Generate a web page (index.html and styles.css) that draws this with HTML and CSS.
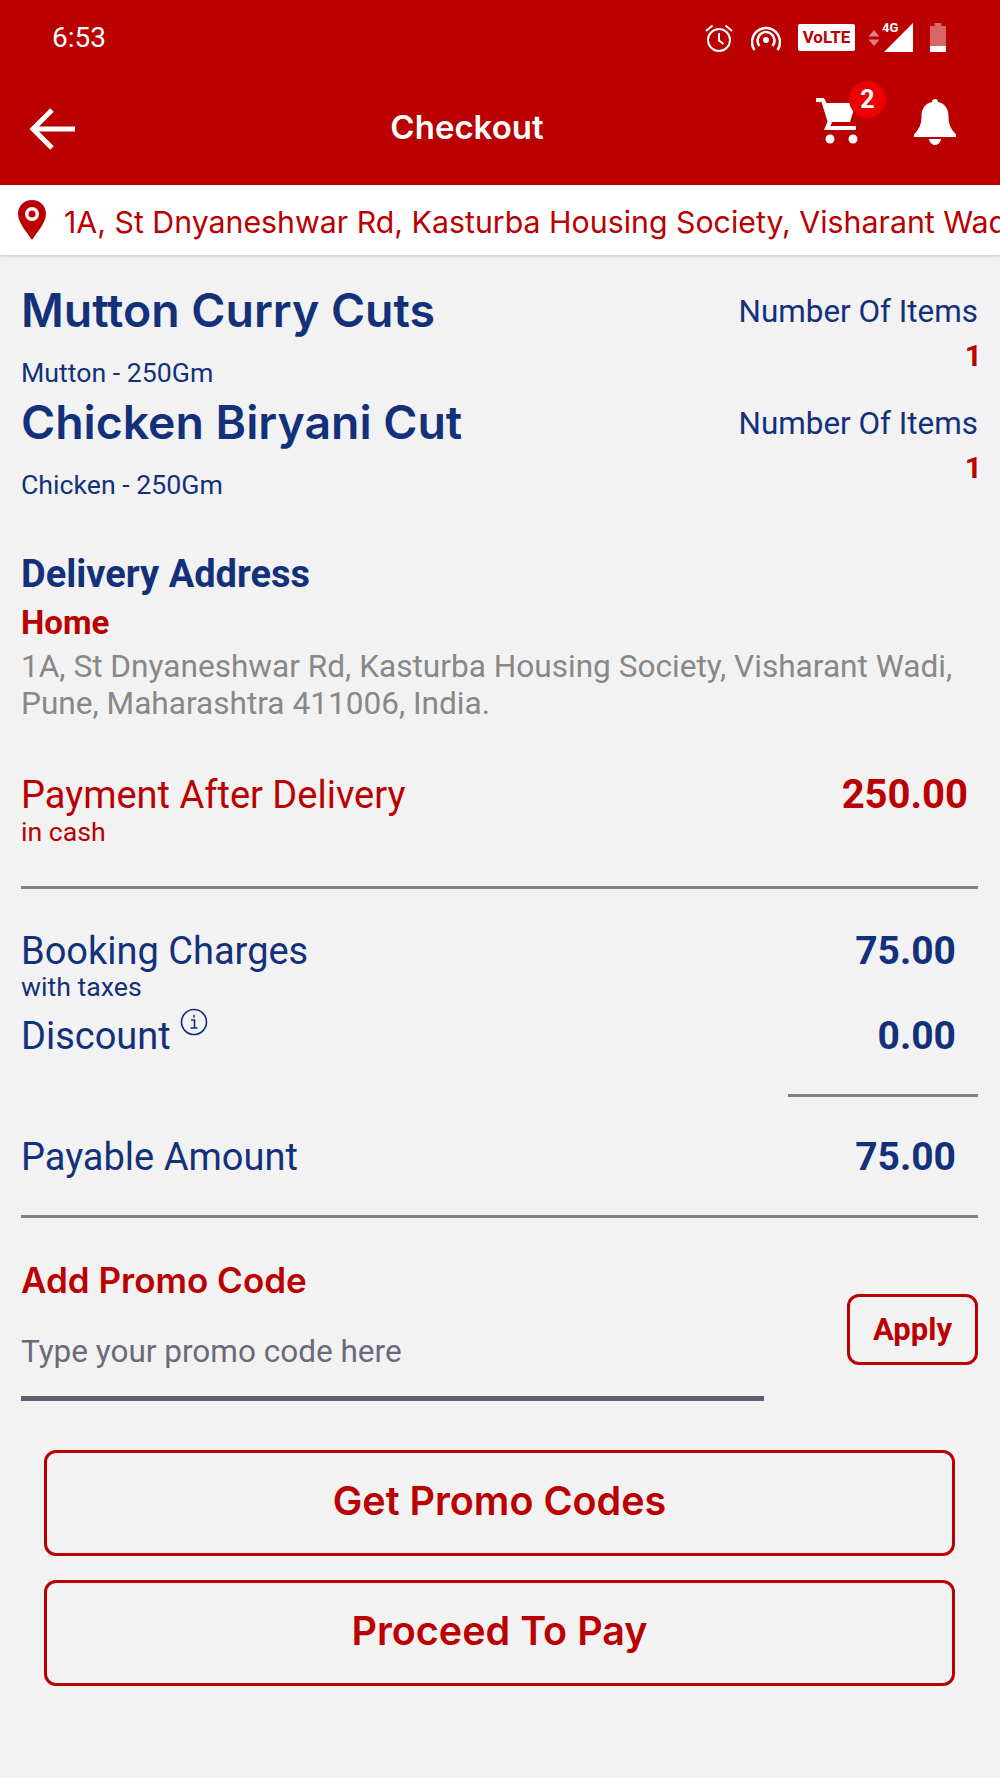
FILE: index.html
```html
<!DOCTYPE html>
<html lang="en">
<head>
    <meta charset="UTF-8">
    <meta name="viewport" content="width=device-width, initial-scale=1.0">
    <title>Checkout</title>
    <link rel="stylesheet" href="styles.css">
</head>
<body>
    <header class="app-header">
        <div class="status-bar">
            <span class="clock">6:53</span>
            <div class="status-icons">
                <svg class="ic-alarm" width="30" height="30" viewBox="0 0 30 30" fill="none" stroke="#fff" stroke-width="2">
                    <circle cx="15" cy="17" r="11"/>
                    <path d="M15 10v7.500l4.500 3.500M2 8l6.500-5.500M28 8l-6.500-5.500"/>
                </svg>
                <svg class="ic-hotspot" width="30" height="26" viewBox="0 0 30 26" fill="none" stroke="#fff" stroke-width="2.600">
                    <circle cx="15" cy="15" r="3" fill="#fff" stroke="none"/>
                    <path d="M8.500 21a8.500 8.500 0 1 1 13 0M3.500 25a14 14 0 1 1 23 0"/>
                </svg>
                <span class="volte">VoLTE</span>
                <svg class="ic-updown" width="12" height="16" viewBox="0 0 12 16" fill="#e08080">
                    <path d="M6 0l5.500 6.500H.5zM6 16L.5 9.500h11z"/>
                </svg>
                <span class="signal">
                    <span class="signal-label">4G</span>
                    <svg width="30" height="30" viewBox="0 0 30 30" fill="#fff"><path d="M29 0v29H0z"/></svg>
                </span>
                <svg class="ic-battery" width="16" height="29" viewBox="0 0 16 29">
                    <path d="M4.500 0h7v3H16v26H0V3h4.500z" fill="#d96666"/>
                    <path d="M0 23h16v6H0z" fill="#fff"/>
                </svg>
            </div>
        </div>
        <div class="toolbar">
            <svg class="ic-back" width="48" height="44" viewBox="0 0 48 44" fill="none" stroke="#fff" stroke-width="5">
                <path d="M5 22h41M23 3L4 22l19 19"/>
            </svg>
            <h1 class="toolbar-title">Checkout</h1>
            <div class="cart">
                <svg width="46" height="48" viewBox="0 0 46 48" fill="#fff">
                    <path d="M0 2h8l2.500 5H40l-6 19H16l-1.500 4H40v4H8l3.500-8.500L5.500 6H0z"/>
                    <circle cx="14" cy="43" r="4.500"/>
                    <circle cx="37" cy="43" r="4.500"/>
                </svg>
                <span class="cart-badge">2</span>
            </div>
            <svg class="ic-bell" width="42" height="46" viewBox="0 0 42 46" fill="#fff">
                <path d="M21 0c2 0 3 1.300 3 3 7 1.500 10.500 7 10.500 14 0 9 2.500 13 7.500 18.500V38H0v-2.500C5 30 7.500 26 7.500 17 7.500 10 11 4.500 18 3c0-1.700 1-3 3-3z"/>
                <path d="M15 40h12c-.5 3.500-3 6-6 6s-5.500-2.500-6-6z"/>
            </svg>
        </div>
    </header>

    <div class="address-bar">
        <svg width="28" height="40" viewBox="0 0 28 40">
            <path d="M14 0C6 0 0 6 0 14c0 9 9 18 14 26 5-8 14-17 14-26C28 6 22 0 14 0z" fill="#ba0000"/>
            <circle cx="14" cy="14" r="7" fill="#fff"/>
            <circle cx="14" cy="14" r="3.500" fill="#ba0000"/>
        </svg>
        <span class="address-text">1A, St Dnyaneshwar Rd, Kasturba Housing Society, Visharant Wadi, Pune, Maharashtra 411006, India.</span>
    </div>

    <main class="content">
        <section class="items">
            <div class="item">
                <div>
                    <h2 class="item-name">Mutton Curry Cuts</h2>
                    <p class="item-sub">Mutton - 250Gm</p>
                </div>
                <div class="item-count">
                    <span>Number Of Items</span>
                    <strong>1</strong>
                </div>
            </div>
            <div class="item">
                <div>
                    <h2 class="item-name">Chicken Biryani Cut</h2>
                    <p class="item-sub">Chicken - 250Gm</p>
                </div>
                <div class="item-count">
                    <span>Number Of Items</span>
                    <strong>1</strong>
                </div>
            </div>
        </section>

        <section class="delivery">
            <h3>Delivery Address</h3>
            <h4>Home</h4>
            <p>1A, St Dnyaneshwar Rd, Kasturba Housing Society, Visharant Wadi, Pune, Maharashtra 411006, India.</p>
        </section>

        <section class="pay-row">
            <div>
                <div class="pay-label">Payment After Delivery</div>
                <div class="pay-sub">in cash</div>
            </div>
            <div class="pay-amount">250.00</div>
        </section>

        <hr class="rule">

        <section class="charges">
            <div class="charge">
                <div>
                    <div class="charge-label">Booking Charges</div>
                    <div class="charge-sub">with taxes</div>
                </div>
                <div class="charge-amount">75.00</div>
            </div>
            <div class="charge charge-discount">
                <div class="charge-label">Discount<svg class="ic-info" width="28" height="28" viewBox="0 0 28 28" fill="none" stroke="#12317a" stroke-width="1.600">
                        <circle cx="14" cy="14" r="12.500"/>
                        <path d="M11 12h3.500v8M10.500 20h7M14 7v2.500"/>
                    </svg></div>
                <div class="charge-amount">0.00</div>
            </div>
        </section>

        <hr class="rule rule-short">

        <section class="charge charge-total">
            <div class="charge-label">Payable Amount</div>
            <div class="charge-amount">75.00</div>
        </section>

        <hr class="rule">

        <section class="promo">
            <div class="promo-field">
                <h3>Add Promo Code</h3>
                <div class="promo-input">Type your promo code here</div>
            </div>
            <button class="btn-apply" type="button">Apply</button>
        </section>

        <div class="actions">
            <button class="btn-wide" type="button">Get Promo Codes</button>
            <button class="btn-wide" type="button">Proceed To Pay</button>
        </div>
    </main>
</body>
</html>
```

FILE: styles.css
```css
body {
    margin: 0;
    width: 1000px;
    height: 1778px;
    overflow: hidden;
    background-color: #f2f2f2;
    font-family: Roboto, sans-serif;
    color: #12317a;
}

h1, h2, h3, h4, p, hr {
    margin: 0;
}

/* Header */
.app-header {
    height: 185px;
    background-color: #ba0000;
    color: #fff;
}

.status-bar {
    height: 75px;
    display: flex;
    align-items: center;
    justify-content: space-between;
    padding: 0 54px 0 52px;
}

.clock {
    font-size: 28px;
}

.status-icons {
    display: flex;
    align-items: center;
}

.ic-hotspot {
    margin-left: 17px;
}

.volte {
    margin-left: 17px;
    width: 57px;
    height: 27px;
    line-height: 27px;
    background-color: #fff;
    color: #ba0000;
    border-radius: 2px;
    text-align: center;
    font-size: 17px;
    font-weight: 700;
}

.ic-updown {
    margin-left: 13px;
}

.signal {
    position: relative;
    display: flex;
    margin-left: 4px;
}

.signal-label {
    position: absolute;
    left: -2px;
    top: -3px;
    font-size: 13px;
    font-weight: 700;
}

.ic-battery {
    margin-left: 16px;
}

.toolbar {
    height: 110px;
    display: flex;
    align-items: center;
    position: relative;
    padding: 0 44px 0 29px;
}

.ic-back {
    margin-bottom: 3px;
}

.toolbar-title {
    position: absolute;
    left: 0;
    right: 0;
    top: 34px;
    text-align: center;
    font-family: Inter, sans-serif;
    font-size: 33px;
    line-height: 36px;
    font-weight: 600;
    margin-left: -66px;
}

.cart {
    position: relative;
    display: flex;
    margin-left: auto;
    margin-right: 52px;
    margin-bottom: 20px;
}

.cart-badge {
    position: absolute;
    left: 33px;
    top: -15px;
    width: 37px;
    height: 37px;
    border-radius: 50%;
    background-color: #ee0000;
    font-size: 25px;
    font-weight: 700;
    line-height: 37px;
    text-align: center;
}

.ic-bell {
    margin-bottom: 16px;
}

/* Address strip */
.address-bar {
    height: 70px;
    display: flex;
    align-items: center;
    gap: 18px;
    padding-left: 18px;
    background-color: #fff;
    box-shadow: 0 1px 3px rgba(0, 0, 0, 0.2);
    white-space: nowrap;
    overflow: hidden;
}

.address-bar svg {
    flex-shrink: 0;
}

.address-text {
    font-family: Inter, sans-serif;
    font-size: 30.300px;
    color: #ba0000;
    margin-top: 3px;
}

/* Main column */
.content {
    padding: 25px 22px 0 21px;
}

.item {
    display: flex;
    justify-content: space-between;
    height: 112px;
}

.item-name {
    font-family: Inter, sans-serif;
    font-size: 46.400px;
    line-height: 60px;
    font-weight: 600;
}

.item-sub {
    margin-top: 18px;
    font-size: 26.700px;
    line-height: 30px;
}

.item-count {
    display: flex;
    flex-direction: column;
    align-items: flex-end;
    font-size: 31.400px;
    line-height: 34px;
    padding-top: 15px;
}

.item-count strong {
    color: #ba0000;
    font-size: 30px;
    margin-top: 10px;
    margin-right: -4px;
}

.delivery {
    margin-top: 48px;
}

.delivery h3 {
    font-size: 38px;
    line-height: 44px;
    font-weight: 700;
}

.delivery h4 {
    margin-top: 8px;
    color: #ba0000;
    font-size: 33px;
    line-height: 38px;
    font-weight: 700;
}

.delivery p {
    margin-top: 6px;
    color: #888;
    font-size: 31.600px;
    line-height: 37px;
}

.pay-row {
    display: flex;
    justify-content: space-between;
    margin-top: 52px;
    padding-right: 10px;
    color: #ba0000;
}

.pay-label {
    font-size: 38px;
    line-height: 42px;
}

.pay-sub {
    margin-top: 1px;
    font-size: 26.700px;
    line-height: 30px;
}

.pay-amount {
    font-size: 40px;
    line-height: 42px;
    font-weight: 700;
}

.rule {
    border: 0;
    height: 3px;
    background-color: #808080;
}

.pay-row + .rule {
    margin-top: 39px;
}

.charges {
    margin-top: 41px;
}

.charge {
    display: flex;
    justify-content: space-between;
    padding-right: 22px;
}

.charge-label {
    font-size: 38px;
    line-height: 42px;
    position: relative;
}

.charge-sub {
    font-size: 26.700px;
    line-height: 30px;
}

.charge-amount {
    font-size: 39px;
    line-height: 42px;
    font-weight: 700;
}

.charge-discount {
    margin-top: 13px;
}

.ic-info {
    position: absolute;
    left: 100%;
    top: -7px;
    margin-left: 9px;
}

.rule-short {
    margin: 37px 0 0 767px;
}

.charge-total {
    margin-top: 39px;
}

.charge-total + .rule {
    margin-top: 37px;
}

.promo {
    display: flex;
    align-items: flex-start;
    justify-content: space-between;
    margin-top: 40px;
}

.promo-field {
    width: 743px;
}

.promo-field h3 {
    color: #ba0000;
    font-family: Inter, sans-serif;
    font-size: 35px;
    line-height: 44px;
    font-weight: 600;
}

.promo-input {
    margin-top: 32px;
    padding-bottom: 26px;
    height: 36px;
    line-height: 36px;
    font-size: 31.500px;
    color: #6a6a7a;
    border-bottom: 5px solid #5f5f70;
}

.btn-apply {
    margin-top: 36px;
    width: 131px;
    height: 71px;
    border: 3px solid #ba0000;
    border-radius: 12px;
    background: transparent;
    color: #ba0000;
    font-family: Roboto, sans-serif;
    font-size: 31px;
    font-weight: 700;
    padding: 0;
}

.actions {
    display: flex;
    flex-direction: column;
    gap: 24px;
    margin: 49px 23px 0 23px;
}

.btn-wide {
    height: 106px;
    border: 3px solid #ba0000;
    border-radius: 12px;
    background: transparent;
    color: #ba0000;
    font-family: Inter, sans-serif;
    font-size: 39.500px;
    font-weight: 600;
    padding: 0 0 5px;
}
```
